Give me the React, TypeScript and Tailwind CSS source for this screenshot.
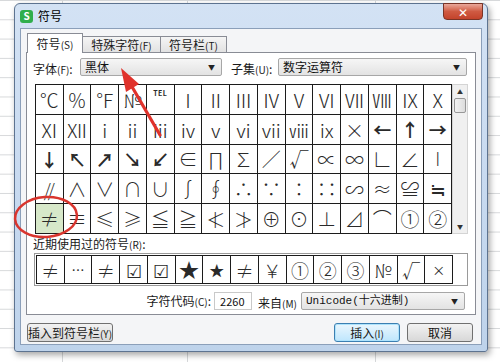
import React from "react";

const FONT = { fontFamily: '"Noto Sans CJK SC", "DejaVu Sans", sans-serif' };

const rows: string[][] = [
  ["℃", "％", "℉", "№", "℡", "Ⅰ", "Ⅱ", "Ⅲ", "Ⅳ", "Ⅴ", "Ⅵ", "Ⅶ", "Ⅷ", "Ⅸ", "Ⅹ"],
  ["Ⅺ", "Ⅻ", "ⅰ", "ⅱ", "ⅲ", "ⅳ", "ⅴ", "ⅵ", "ⅶ", "ⅷ", "ⅸ", "×", "←", "↑", "→"],
  ["↓", "↖", "↗", "↘", "↙", "∈", "∏", "∑", "∕", "√", "∝", "∞", "∟", "∠", "∣"],
  ["∥", "∧", "∨", "∩", "∪", "∫", "∮", "∴", "∵", "∶", "∷", "∽", "≈", "≌", "≒"],
  ["≠", "≡", "≤", "≥", "≦", "≧", "≮", "≯", "⊕", "⊙", "⊥", "⊿", "⌒", "①", "②"],
];

const bold = new Set(["←", "↑", "→", "↓", "↖", "↗", "↘", "↙"]);

const recent = ["≠", "…", "≠", "☑", "☑", "★", "★", "≠", "￥", "①", "②", "③", "№", "√", "×"];

function Label({ main, hot, colon = true }: { main: string; hot: string; colon?: boolean }) {
  return (
    <span className="text-[12px] text-[#1a1a1a] whitespace-nowrap leading-none">
      {main}
      <span className="text-[10px]">({hot})</span>
      {colon ? ":" : ""}
    </span>
  );
}

function Combo({ text, width, mono = false }: { text: string; width: string; mono?: boolean }) {
  return (
    <div
      className={`${width} h-[18px] flex items-center justify-between rounded-[2px] border border-[#a7a7a7] bg-gradient-to-b from-[#f6f6f6] to-[#e3e3e3] pl-[4px] pr-[6px]`}
    >
      <span
        className={`${mono ? "text-[11px]" : "text-[12px]"} text-[#111] leading-none`}
        style={mono ? { fontFamily: '"Liberation Mono", "Noto Sans CJK SC", monospace' } : undefined}
      >
        {text}
      </span>
      <span className="text-[7px] text-[#222]">▼</span>
    </div>
  );
}

function Button({ children, def = false, width }: { children: React.ReactNode; def?: boolean; width: string }) {
  return (
    <div
      className={`${width} h-[19px] flex items-center justify-center rounded-[3px] border text-[12px] text-[#111] ${
        def
          ? "border-[#3c7fb1] bg-gradient-to-b from-[#eaf6fd] to-[#bee6fd] shadow-[inset_0_0_0_1px_#aee3fc]"
          : "border-[#707070] bg-gradient-to-b from-[#f2f2f2] to-[#d8d8d8]"
      }`}
    >
      {children}
    </div>
  );
}

function Sym({ s }: { s: string }) {
  if (s === "∥") return <span className="text-[18px] font-light tracking-[-3px] pr-[3px]">//</span>;
  if (s === "℡") return <span className="self-start mt-[5px] text-[7px] font-bold tracking-[0.5px]">TEL</span>;
  return <>{s}</>;
}

export default function App() {
  return (
    <div
      className="relative w-[500px] h-[362px] overflow-hidden bg-white bg-[linear-gradient(to_bottom,#d6d8da_1px,transparent_1px)] bg-[size:100%_19.3px]"
      style={FONT}
    >
      <div className="absolute left-[62px] top-0 h-full w-px bg-[#d6d8da]" />
      <div className="absolute left-[187px] top-0 h-full w-px bg-[#d6d8da]" />
      <div className="absolute left-[375px] top-0 h-full w-px bg-[#d6d8da]" />

      {/* dialog window */}
      <div className="absolute left-[14px] top-[3px] w-[474px] h-[349px] flex flex-col rounded-t-[6px] rounded-b-[3px] border border-[#5d7390] bg-gradient-to-b from-[#d3e2f4] via-[#c8daf0] to-[#bed3eb] shadow-[2px_3px_6px_rgba(0,0,0,0.35)]">
        {/* title bar */}
        <div className="h-[24px] flex items-center pl-[5px]">
          <div className="w-[13px] h-[13px] rounded-[3px] bg-[#2fae4c] flex items-center justify-center">
            <span className="text-[10px] font-bold text-white leading-none">S</span>
          </div>
          <span className="ml-[5px] text-[12px] text-black leading-none">符号</span>
          <div className="ml-auto mr-[4px] self-start -mt-px w-[40px] h-[17px] rounded-b-[4px] border border-[#7a3426] bg-gradient-to-b from-[#e9a89a] via-[#cf5a42] to-[#c3432b] flex items-center justify-center">
            <span className="text-white text-[12px] font-bold leading-none">✕</span>
          </div>
        </div>

        {/* client area */}
        <div className="mx-[5px] h-[317px] flex flex-col border border-[#8b9fb9] bg-[#f4f5f7] px-[5px] pt-[4px]">
          {/* tabs */}
          <div className="h-[19px] flex items-end ml-px">
            <div className="relative z-10 w-[56px] h-[20px] -mb-px flex items-center justify-center border border-b-0 border-[#898c95] bg-white">
              <Label main="符号" hot="S" colon={false} />
            </div>
            <div className="w-[78px] h-[16px] flex items-center justify-center border border-b-0 border-l-0 border-[#898c95] bg-gradient-to-b from-[#f5f5f5] to-[#e2e2e2]">
              <Label main="特殊字符" hot="F" colon={false} />
            </div>
            <div className="w-[66px] h-[16px] flex items-center justify-center border border-b-0 border-l-0 border-[#898c95] bg-gradient-to-b from-[#f5f5f5] to-[#e2e2e2]">
              <Label main="符号栏" hot="T" colon={false} />
            </div>
          </div>

          {/* tab panel */}
          <div className="h-[263px] flex flex-col border border-[#898c95] bg-white">
            <div className="mt-[5px] h-[18px] flex items-center">
              <div className="ml-[6px] w-[47px]">
                <Label main="字体" hot="F" />
              </div>
              <Combo text="黑体" width="w-[142px]" />
              <div className="ml-[9px] w-[47px]">
                <Label main="子集" hot="U" />
              </div>
              <Combo text="数字运算符" width="w-[189px]" />
            </div>

            {/* symbol grid */}
            <div className="mt-[8px] ml-[8px] flex">
              <div className="w-[417px] h-[150px] grid grid-cols-[repeat(15,1fr)] grid-rows-[repeat(5,1fr)] gap-px bg-[#1c1c1c] border border-[#1c1c1c]">
                {rows.flat().map((s, i) => (
                  <div
                    key={i}
                    className={`flex items-center justify-center text-[#2a2a2a] leading-none ${
                      i === 60 ? "bg-[#d7e8c9]" : "bg-white"
                    } ${bold.has(s) ? "font-bold text-[18px]" : "text-[19px] font-light"}`}
                  >
                    <Sym s={s} />
                  </div>
                ))}
              </div>
              {/* scrollbar */}
              <div className="w-[16px] h-[150px] flex flex-col border border-[#d4d4d4] bg-[#f0f0f0]">
                <div className="h-[13px] flex items-center justify-center text-[6px] text-[#333]">▲</div>
                <div className="h-[15px] mx-px rounded-[2px] border border-[#979797] bg-gradient-to-r from-[#f3f3f3] to-[#dcdcdc]" />
                <div className="flex-1" />
                <div className="h-[13px] flex items-center justify-center text-[6px] text-[#333]">▼</div>
              </div>
            </div>

            <div className="ml-[6px] h-[18px] flex items-center mt-px">
              <Label main="近期使用过的符号" hot="R" />
            </div>

            {/* recent */}
            <div className="ml-[7px] w-[434px] h-[33px] flex border border-[#9a9a9a] bg-white p-px">
              <div className="w-[417px] grid grid-cols-[repeat(15,1fr)] gap-px bg-[#1c1c1c] border border-[#1c1c1c]">
                {recent.map((s, i) => (
                  <div
                    key={i}
                    className={`bg-white flex items-center justify-center leading-none text-[#2a2a2a] ${
                      i === 5 ? "text-[20px]" : i === 6 ? "text-[15px]" : i === 14 || i === 1 ? "text-[13px]" : "text-[18px] font-light"
                    }`}
                  >
                    {s}
                  </div>
                ))}
              </div>
            </div>

            {/* code row */}
            <div className="mt-[6px] h-[18px] flex items-center justify-end pr-[10px]">
              <Label main="字符代码" hot="C" />
              <div className="ml-[3px] w-[38px] h-[18px] flex items-center border border-[#c9c9c9] bg-white pl-[5px] text-[11px] text-[#111]">
                2260
              </div>
              <div className="ml-[6px] mr-[4px]">
                <Label main="来自" hot="M" colon={false} />
              </div>
              <Combo text="Unicode(十六进制)" width="w-[164px]" mono />
            </div>
          </div>

          {/* buttons */}
          <div className="mt-[8px] flex items-center px-px">
            <Button width="w-[86px]">
              <Label main="插入到符号栏" hot="Y" colon={false} />
            </Button>
            <div className="ml-auto flex gap-[7px] mr-[2px]">
              <Button def width="w-[66px]">
                <Label main="插入" hot="I" colon={false} />
              </Button>
              <Button width="w-[66px]">取消</Button>
            </div>
          </div>
        </div>
      </div>

      {/* annotations */}
      <svg className="absolute inset-0 pointer-events-none" width="500" height="362" viewBox="0 0 500 362">
        <line x1="131" y1="85" x2="160" y2="135" stroke="#e0322b" strokeWidth="3.2" strokeLinecap="round" />
        <polygon points="121,68 126,92 139,84" fill="#e0322b" />
        <ellipse cx="46" cy="217" rx="31" ry="20" fill="none" stroke="#d9352e" strokeWidth="2.5" transform="rotate(-4 46 217)" />
      </svg>
    </div>
  );
}
